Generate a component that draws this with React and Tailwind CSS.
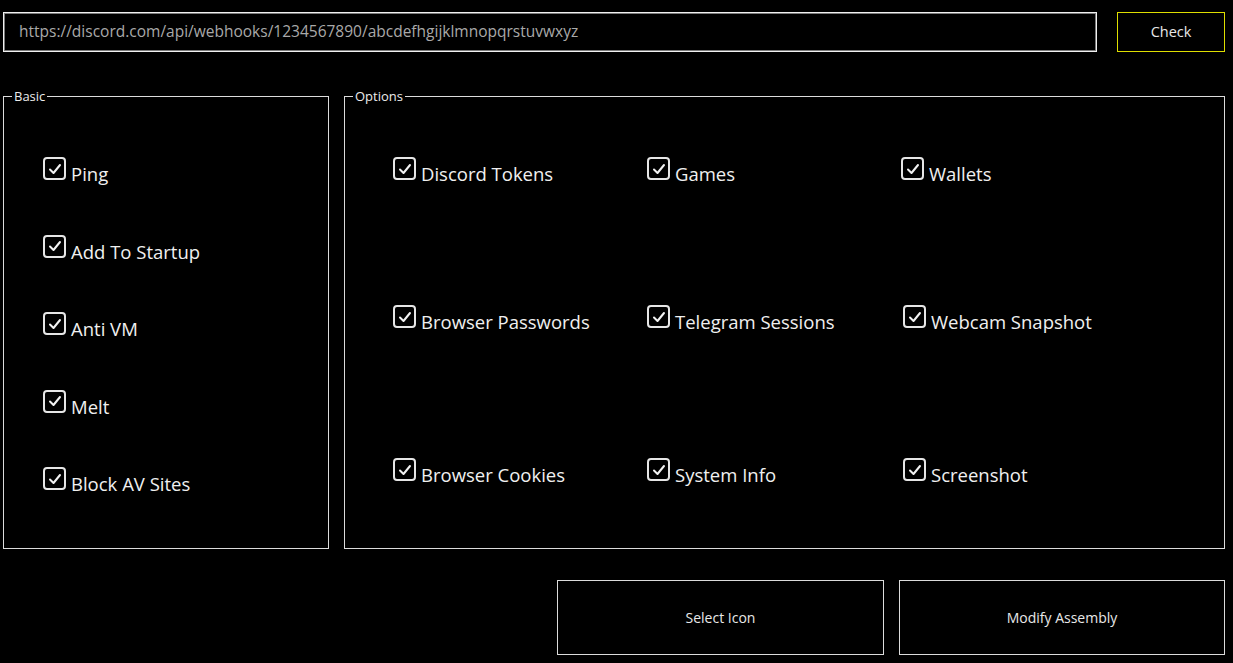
import React, { useState } from 'react';

const BASIC = ['Ping', 'Add To Startup', 'Anti VM', 'Melt', 'Block AV Sites'];

const OPTIONS = [
    ['Discord Tokens', 'Games', 'Wallets'],
    ['Browser Passwords', 'Telegram Sessions', 'Webcam Snapshot'],
    ['Browser Cookies', 'System Info', 'Screenshot'],
];

function CheckItem({ label, checked, onToggle }) {
    return (
        <label className="flex items-start gap-[5px] cursor-pointer select-none">
            <span className="w-[23px] h-[23px] shrink-0 rounded-[4px] border-2 border-[#e6e6e6] flex items-center justify-center">
                {checked && (
                    <svg width="14" height="14" viewBox="0 0 14 14" fill="none">
                        <path d="M2 7.5 L5.5 11 L12 3" stroke="#f2f2f2" strokeWidth="2" strokeLinecap="round" strokeLinejoin="round" />
                    </svg>
                )}
            </span>
            <input type="checkbox" className="hidden" checked={checked} onChange={onToggle} />
            <span className="mt-[5px] text-[18.5px] leading-[24px] text-[#f0f0f0]">{label}</span>
        </label>
    );
}

export default function App() {
    const [checked, setChecked] = useState({});
    const isOn = (k) => checked[k] !== false;
    const toggle = (k) => setChecked(prev => ({ ...prev, [k]: !isOn(k) }));

    return (
        <div className="w-[1233px] h-[663px] bg-black overflow-hidden pl-[3px] pr-[8px] pt-[12px] font-['Open_Sans',sans-serif]">
            {/* webhook row */}
            <div className="flex gap-[20px] h-[40px]">
                <div className="flex-1 border border-[#f0f0f0] shadow-[inset_0_0_0_1px_#7a7a7a] flex items-center px-[15px]">
                    <input
                        className="w-full bg-transparent outline-none text-[15.5px] text-[#a9a9a9]"
                        defaultValue="https://discord.com/api/webhooks/1234567890/abcdefhgijklmnopqrstuvwxyz"
                    />
                </div>
                <button className="w-[108px] border border-[#dede00] text-[14.5px] text-[#e8e8e8]">Check</button>
            </div>

            {/* groups */}
            <div className="flex gap-[15px] mt-[37px] h-[460px]">
                <fieldset className="w-[326px] border border-[#dcdcdc] px-[8px] m-0 min-w-0">
                    <legend className="px-[2px] text-[13px] leading-[14px] text-[#ececec]">Basic</legend>
                    <div className="flex flex-col gap-y-[48.5px] pl-[31px] pt-[54px]">
                        {BASIC.map(k => (
                            <CheckItem key={k} label={k} checked={isOn(k)} onToggle={() => toggle(k)} />
                        ))}
                    </div>
                </fieldset>

                <fieldset className="flex-1 border border-[#dcdcdc] px-[8px] m-0 min-w-0">
                    <legend className="px-[2px] text-[13px] leading-[14px] text-[#ececec]">Options</legend>
                    <div className="grid grid-cols-[254px_254px_254px] grid-rows-[148px_153px_auto] pl-[40px] pt-[54px]">
                        {OPTIONS.flat().map((k, i) => (
                            <div key={k} className={i === 5 || i === 8 ? 'ml-[2px]' : ''}>
                                <CheckItem label={k} checked={isOn(k)} onToggle={() => toggle(k)} />
                            </div>
                        ))}
                    </div>
                </fieldset>
            </div>

            {/* actions */}
            <div className="flex justify-end gap-[15px] mt-[31px]">
                <button className="w-[327px] h-[75px] border border-[#dcdcdc] text-[14px] text-[#e8e8e8]">Select Icon</button>
                <button className="w-[326px] h-[75px] border border-[#dcdcdc] text-[14px] text-[#e8e8e8]">Modify Assembly</button>
            </div>
        </div>
    );
}
